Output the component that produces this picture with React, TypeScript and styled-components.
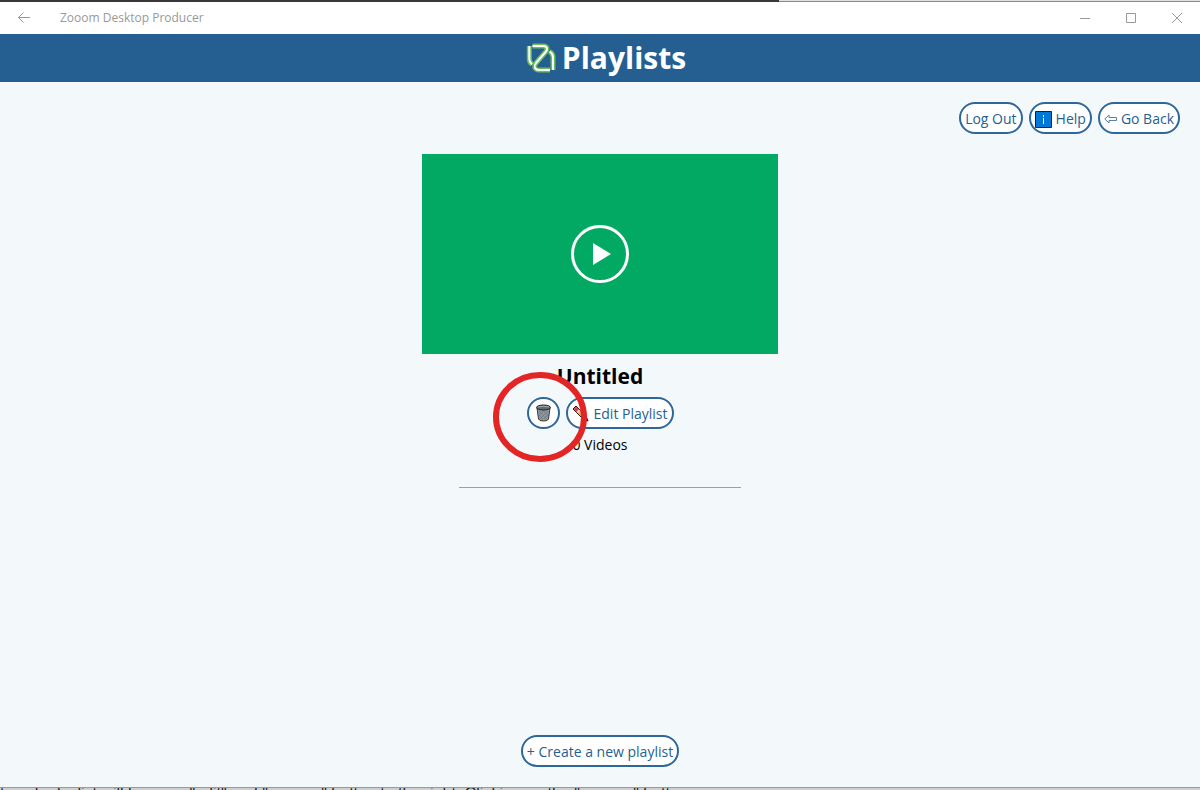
import React from "react";
import styled, { createGlobalStyle } from "styled-components";

const GlobalStyle = createGlobalStyle`
  * { box-sizing: border-box; }
  body { margin: 0; font-family: "Segoe UI", "Open Sans", "Noto Sans", sans-serif; font-size: 14px; color: #000; }
`;

const Desktop = styled.div`
  display: flex;
  flex-direction: column;
  height: 100vh;
  background: #f3f8fb;
`;

const TopEdge = styled.div`
  display: flex;
  flex: none;
  height: 2px;
`;

const EdgePart = styled.div<{ $dark?: boolean }>`
  flex: ${(p) => (p.$dark ? "779" : "421")} 1 0;
  background: ${(p) => (p.$dark ? "#3a3738" : "linear-gradient(#e0e0e0 50%, #8c8c8c 50%)")};
`;

const TitleBar = styled.div`
  display: flex;
  align-items: center;
  flex: none;
  height: 32px;
  background: #fff;
  color: #999;
`;

const WindowButton = styled.button<{ $wide?: boolean }>`
  display: flex;
  align-items: center;
  justify-content: center;
  width: ${(p) => (p.$wide ? 48 : 46)}px;
  height: 32px;
  padding: 0;
  border: 0;
  background: none;
  color: inherit;
`;

const AppName = styled.span`
  flex: 1;
  padding-left: 12px;
  font-size: 12px;
  line-height: 16px;
`;

const Header = styled.header`
  display: flex;
  flex: none;
  align-items: center;
  justify-content: center;
  gap: 6px;
  height: 48px;
  padding-left: 12px;
  background: #255f91;
`;

const Heading = styled.h1`
  margin: 0;
  color: #fff;
  font-size: 30px;
  font-weight: 700;
  line-height: 48px;
`;

const Page = styled.main`
  display: flex;
  flex: 1;
  flex-direction: column;
  align-items: center;
  min-height: 0;
  padding: 20px;
`;

const Toolbar = styled.nav`
  display: flex;
  align-self: flex-end;
  gap: 6px;
  margin-bottom: 20px;
`;

const PillButton = styled.button<{ $round?: boolean }>`
  display: flex;
  align-items: center;
  justify-content: center;
  gap: 4px;
  height: 32px;
  min-width: ${(p) => (p.$round ? "33px" : "0")};
  padding: ${(p) => (p.$round ? "0" : "2px 4px 0")};
  border: 2px solid #2e689a;
  border-radius: 16px;
  background: #fff;
  color: #255f91;
  font-family: inherit;
  font-size: 14px;
  line-height: 20px;
  white-space: nowrap;
`;

const Card = styled.section`
  display: flex;
  flex-direction: column;
  align-items: center;
`;

const Thumbnail = styled.button`
  display: flex;
  align-items: center;
  justify-content: center;
  width: 356px;
  height: 200px;
  padding: 0;
  border: 0;
  background: #02a962;
`;

const CardTitle = styled.h2`
  margin: 7px 0 6px;
  font-size: 21px;
  font-weight: 700;
  line-height: 30px;
`;

const Actions = styled.div`
  position: relative;
  display: flex;
  gap: 6px;
`;

const Highlight = styled.svg`
  position: absolute;
  top: -25px;
  left: -34px;
  z-index: 1;
  pointer-events: none;
`;

const Count = styled.p`
  margin: 6px 0 0;
  line-height: 20px;
`;

const Divider = styled.hr`
  width: 282px;
  height: 1px;
  margin: 32px 0 0;
  border: 0;
  background: #72c167;
`;

const Footer = styled.footer`
  margin-top: auto;
`;

const BottomEdge = styled.div`
  flex: none;
  height: 3px;
  overflow: hidden;
  border-top: 1px solid #9b9b9b;
  background: #cfcfcf;
  color: #222;
  font-family: "Liberation Sans", sans-serif;
  font-size: 16px;
  line-height: 12px;
  white-space: nowrap;
`;

const Logo = () => (
  <svg width="30" height="32" viewBox="0 0 30 32" fill="none" strokeLinejoin="round" aria-hidden="true">
    {[
      { color: "#69bd5b", width: 5 },
      { color: "#ffffff", width: 2 },
    ].map((s) => (
      <g key={s.color} stroke={s.color} strokeWidth={s.width}>
        <path d="M3.300 4V17Q3.300 20 6 22.500" />
        <path d="M6.500 4H17Q21 4 21 7Q21 8 20 9.500L10 21Q8 23.500 9 26Q10 28 13 28H24" />
        <path d="M23.500 9.500Q27 11.500 27 15V28" />
      </g>
    ))}
  </svg>
);

const InfoIcon = () => (
  <svg width="17" height="17" viewBox="0 0 17 17" aria-hidden="true">
    <path fill="#0078d7" stroke="#17212c" d="M.5.5h16v16H.5z" />
    <path fill="#fff" d="M8 4h1v2H8zM8 7h1v6H8z" />
  </svg>
);

const ArrowIcon = () => (
  <svg width="13" height="10" viewBox="0 0 13 10" fill="none" stroke="#5682aa" aria-hidden="true">
    <path d="M.8 5 5 1V3.5H12.5V6.5H5V9Z" />
  </svg>
);

const BinIcon = () => (
  <svg width="17" height="18" viewBox="0 0 17 18" aria-hidden="true">
    <path d="M2 4 3.5 15Q4 17 8.500 17T13.500 15L15 4Z" fill="#8f989d" stroke="#3a3a3a" />
    <path d="m4 7 8 8M8 6l5 6M4 11l4 4M13 7l-8 8M9 6l-5 6M13 11l-4 4" stroke="#68757c" strokeWidth=".7" />
    <ellipse cx="8.500" cy="3.500" rx="7" ry="2.500" fill="#626b70" stroke="#252525" />
    <path d="M3 3Q8 1.500 14 3" fill="none" stroke="#a6adb1" />
  </svg>
);

const PencilIcon = () => (
  <svg width="18" height="18" viewBox="0 0 18 18" aria-hidden="true">
    <path d="M1 4 4 1 14 11 16 16 11 14Z" fill="#f8b64c" stroke="#171717" />
    <path d="m1.500 4 2.500-2.500L7 4.500 4.500 7Z" fill="#e83a4a" />
    <path d="m4.500 7 2.500-2.500L8 5.500 5.500 8Z" fill="#dce2e5" />
    <path d="m14 13 2.500 3.500L13 14.500Z" fill="#171717" />
  </svg>
);

export default function App() {
  return (
    <>
      <GlobalStyle />
      <Desktop>
        <TopEdge>
          <EdgePart $dark />
          <EdgePart />
        </TopEdge>
        <TitleBar>
          <WindowButton $wide aria-label="Back">
            <svg width="14" height="12" viewBox="0 0 14 12" fill="none" stroke="currentColor">
              <path d="M13 5.500H1M6.500.5l-5 5 5 5" />
            </svg>
          </WindowButton>
          <AppName>Zooom Desktop Producer</AppName>
          <WindowButton aria-label="Minimize">
            <svg width="10" height="10" stroke="currentColor"><path d="M0 5.500h10" /></svg>
          </WindowButton>
          <WindowButton aria-label="Maximize">
            <svg width="10" height="10" fill="none" stroke="currentColor"><path d="M.5.5h9v9h-9z" /></svg>
          </WindowButton>
          <WindowButton aria-label="Close">
            <svg width="10" height="10" stroke="currentColor"><path d="m0 0 10 10M10 0 0 10" /></svg>
          </WindowButton>
        </TitleBar>
        <Header>
          <Logo />
          <Heading>Playlists</Heading>
        </Header>
        <Page>
          <Toolbar>
            <PillButton>Log Out</PillButton>
            <PillButton><InfoIcon />Help</PillButton>
            <PillButton><ArrowIcon />Go Back</PillButton>
          </Toolbar>
          <Card>
            <Thumbnail aria-label="Play playlist">
              <svg width="60" height="60" viewBox="0 0 60 60">
                <circle cx="30" cy="30" r="27.500" fill="none" stroke="#fff" strokeWidth="3" />
                <path d="M23 19v22l18-11z" fill="#fff" />
              </svg>
            </Thumbnail>
            <CardTitle>Untitled</CardTitle>
            <Actions>
              <PillButton $round aria-label="Delete playlist"><BinIcon /></PillButton>
              <PillButton><PencilIcon />Edit Playlist</PillButton>
              <Highlight width="94" height="90" viewBox="0 0 94 90" aria-hidden="true">
                <ellipse cx="47" cy="45" rx="44" ry="42" fill="none" stroke="#e32526" strokeWidth="6" />
              </Highlight>
            </Actions>
            <Count>0 Videos</Count>
            <Divider />
          </Card>
          <Footer>
            <PillButton>+ Create a new playlist</PillButton>
          </Footer>
        </Page>
        <BottomEdge>t each playlist will have an "edit" and "remove" button to the right. Clicking on the "remove" button</BottomEdge>
      </Desktop>
    </>
  );
}
